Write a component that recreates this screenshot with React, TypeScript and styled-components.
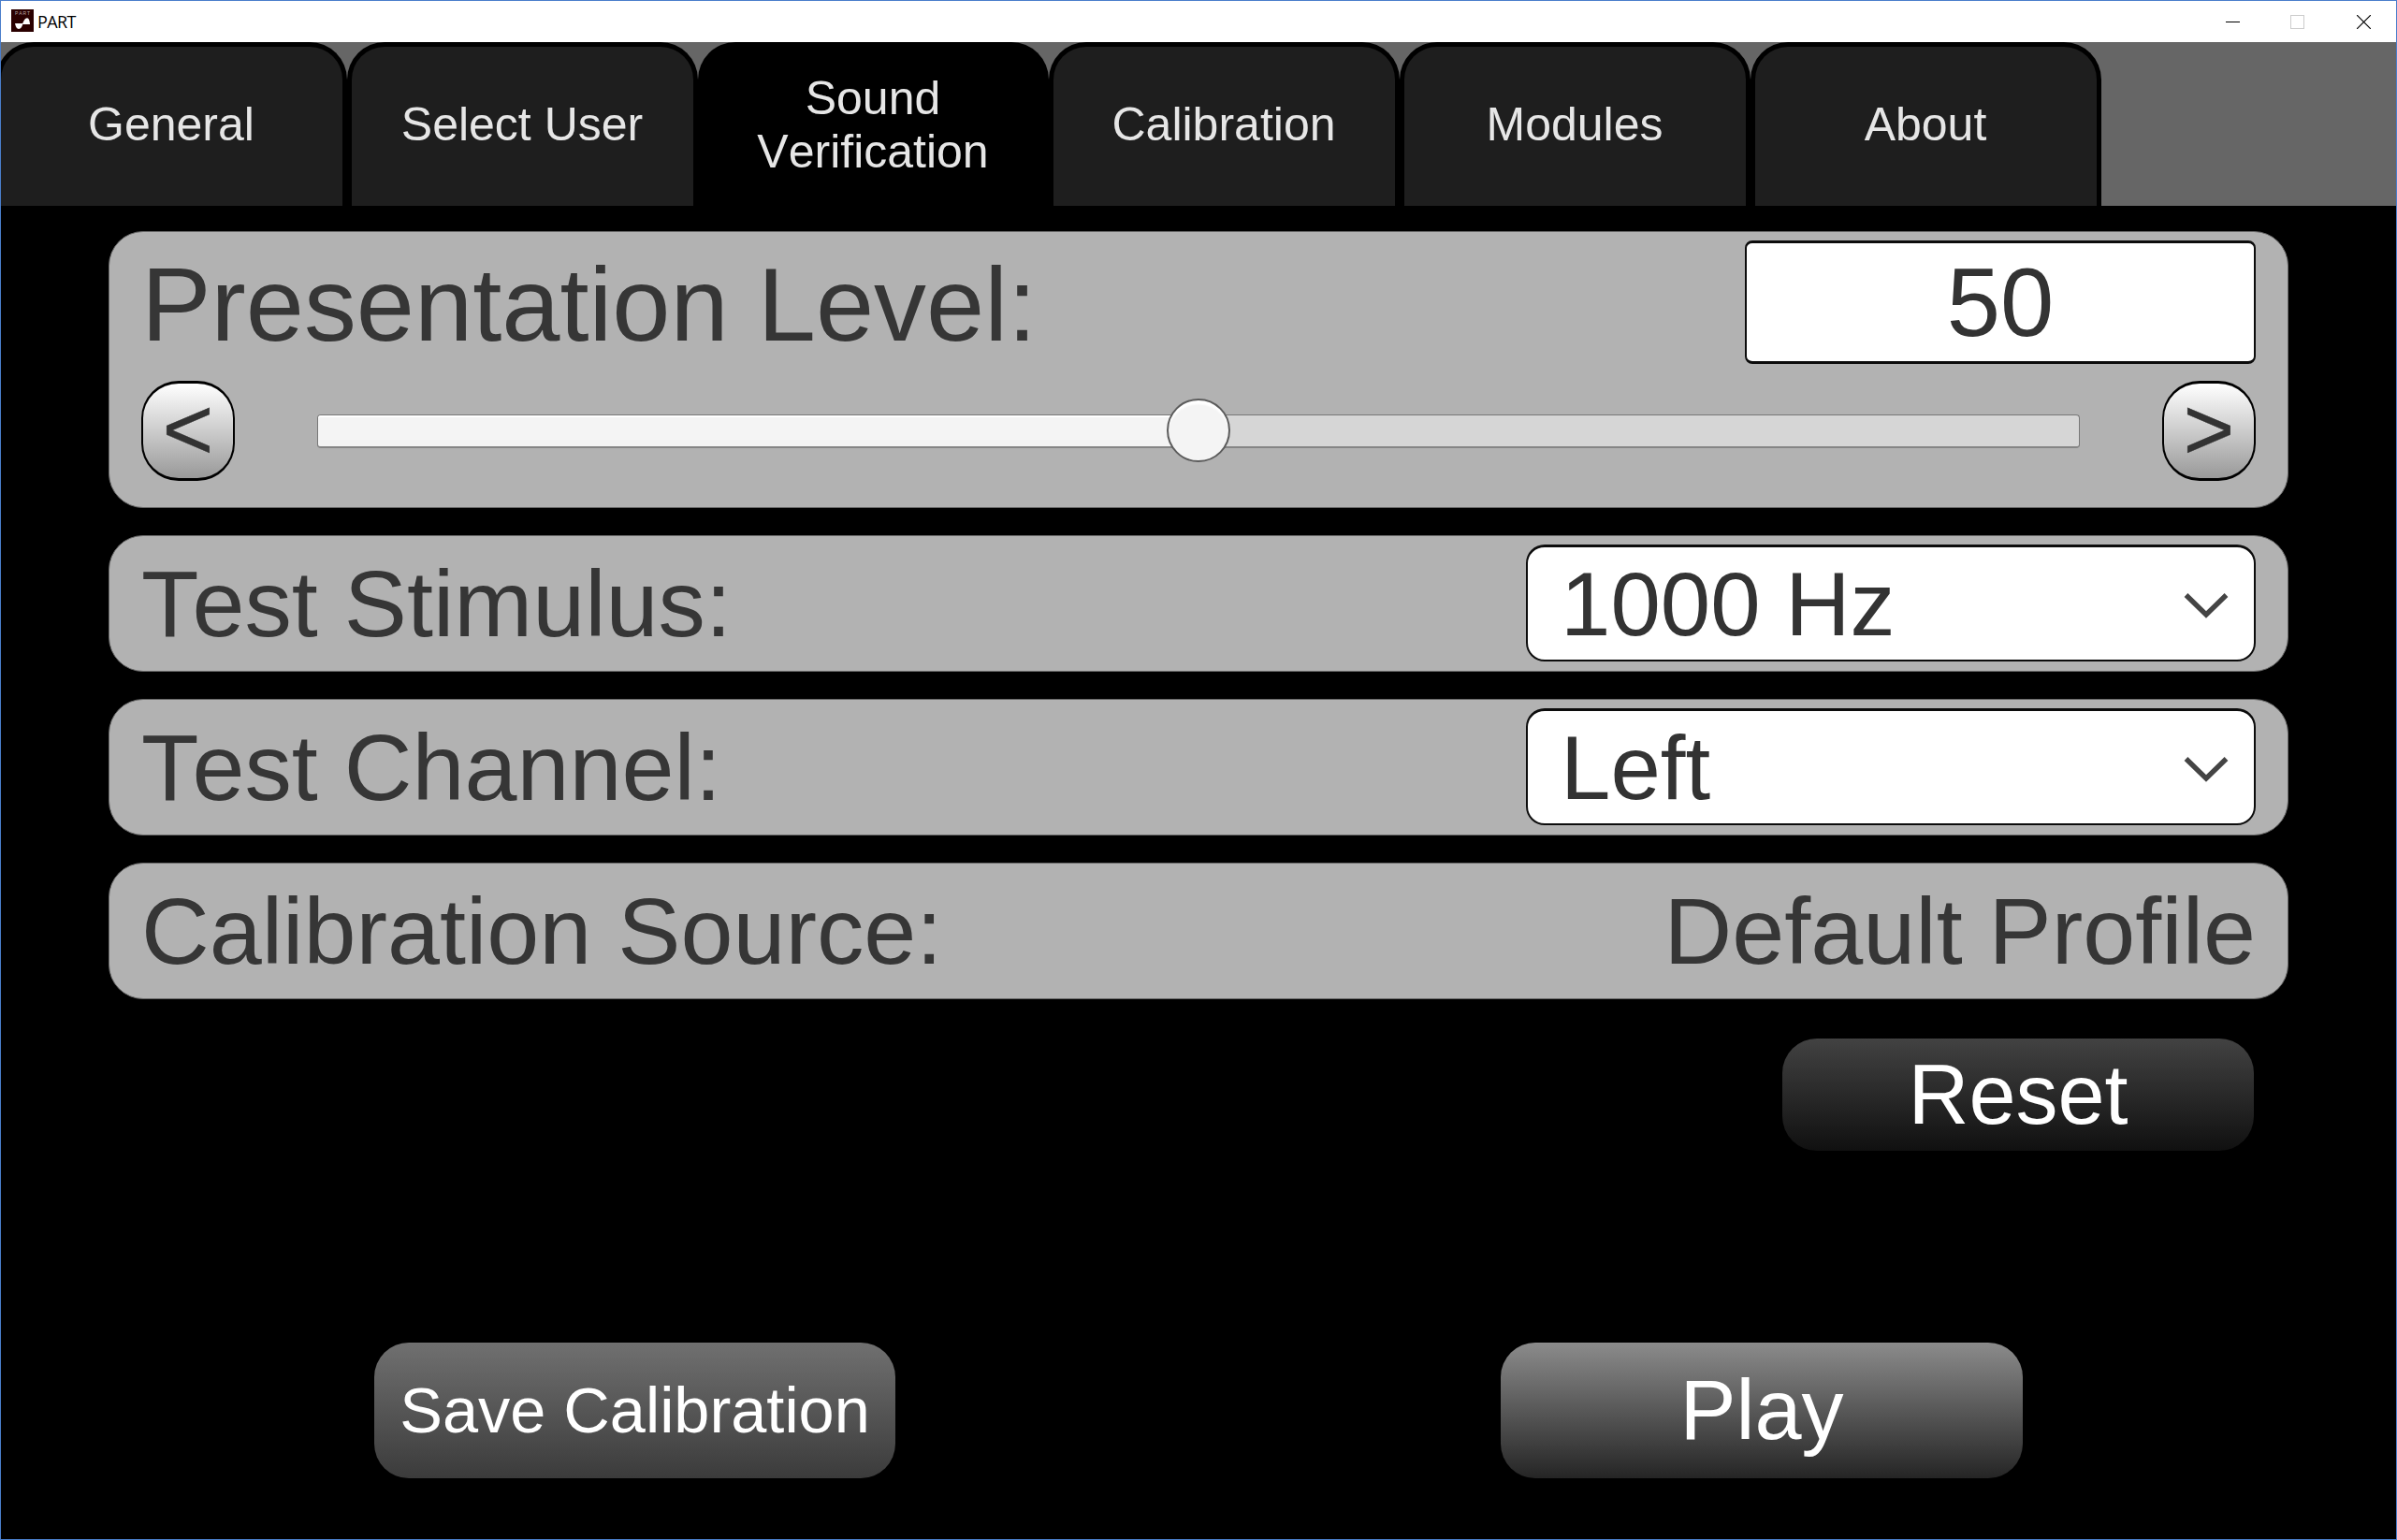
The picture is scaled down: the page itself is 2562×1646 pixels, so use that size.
import React, { useState } from "react";
import styled, { createGlobalStyle } from "styled-components";

const GlobalStyle = createGlobalStyle`
  body { margin: 0; background: #000; }
  * { box-sizing: border-box; }
  button { padding: 0; margin: 0; cursor: pointer; }
`;

const Window = styled.div`
  width: 2562px;
  height: 1646px;
  border: 1px solid #4a7ecb;
  background: #000;
  overflow: hidden;
  display: flex;
  flex-direction: column;
  font-family: "Liberation Sans", Arial, sans-serif;
  font-kerning: none;
  font-variant-ligatures: none;
`;

const TitleBar = styled.header`
  height: 44px;
  flex: none;
  background: #fff;
  display: flex;
  align-items: center;
  padding: 0 27px 0 11px;
`;

const AppIcon = styled.svg`
  width: 24px;
  height: 24px;
  margin-top: -2px;
`;

const Title = styled.span`
  flex: 1;
  margin-left: 4px;
  font: 18px/24px "Open Sans", sans-serif;
  letter-spacing: -0.6px;
  color: #000;
`;

const Controls = styled.div`
  display: flex;
  align-items: center;
  height: 100%;
  svg { display: block; }
`;

const Control = styled.div<{ $gap?: number }>`
  width: 15px;
  height: 15px;
  margin-left: ${(p) => p.$gap ?? 0}px;
`;

const TabStrip = styled.nav`
  height: 175px;
  flex: none;
  background: #666;
  display: flex;
`;

const Tab = styled.button<{ $active: boolean }>`
  width: 375px;
  height: 175px;
  flex: none;
  border: 5px solid #000;
  border-bottom: 0;
  border-radius: 40px 40px 0 0;
  background: ${(p) => (p.$active ? "#000" : "#1e1e1e")};
  color: #e6e6e6;
  font: 50px/57px "Liberation Sans", Arial, sans-serif;
  font-kerning: none;
  font-variant-ligatures: none;
  white-space: pre-line;
  padding: 0 1px 3px 0;
  &:first-child { margin-left: -5px; }
`;

const Content = styled.main`
  flex: 1;
  padding: 27px 115px 0;
  display: flex;
  flex-direction: column;
`;

const Panels = styled.section`
  display: flex;
  flex-direction: column;
  gap: 29px;
`;

const Panel = styled.div`
  border: 1px solid #686868;
  border-radius: 37px;
  background: #b2b2b2;
  padding: 0 34px;
  color: #363636;
`;

const LevelPanel = styled(Panel)`
  height: 296px;
  padding-top: 9px;
`;

const Row = styled(Panel)`
  height: 146px;
  display: flex;
  align-items: center;
  justify-content: space-between;
`;

const LevelHeader = styled.div`
  display: flex;
  justify-content: space-between;
  height: 132px;
`;

const LevelLabel = styled.label`
  font-size: 111.8px;
  line-height: 138px;
  white-space: nowrap;
`;

const Label = styled.span<{ $tightInitial?: boolean }>`
  font-size: 100.7px;
  line-height: 144px;
  white-space: nowrap;
  &::first-letter {
    letter-spacing: ${(p) => (p.$tightInitial ? "-7px" : "normal")};
  }
`;

const NumberBox = styled.div`
  width: 546px;
  height: 132px;
  border: 2px solid #0c0c0c;
  border-top-width: 3px;
  border-bottom-width: 3px;
  border-radius: 8px;
  background: #fff;
  color: #333;
  font-size: 103px;
  line-height: 128px;
  text-align: center;
`;

const SliderRow = styled.div`
  margin-top: 18px;
  height: 107px;
  display: flex;
  align-items: center;
  gap: 88px;
`;

const StepButton = styled.button`
  width: 100px;
  height: 107px;
  flex: none;
  border: 2px solid #000;
  border-top-width: 3px;
  border-bottom-width: 3px;
  border-radius: 40px;
  background: linear-gradient(#fff, #999);
  color: #333;
  font: 94px/98px "Liberation Sans", Arial, sans-serif;
  -webkit-text-stroke: 0.4px #333;
  padding-bottom: 3px;
`;

const Track = styled.div`
  position: relative;
  flex: 1;
  height: 36px;
  border: 1px solid #777;
  border-bottom: 2px solid #858585;
  border-radius: 4px;
  background: #d6d6d6;
`;

const Fill = styled.div`
  height: 100%;
  border-radius: 3px 0 0 3px;
  border-top: 2px solid #fff;
  background: #f4f4f4;
`;

const Thumb = styled.div`
  position: absolute;
  top: -18px;
  width: 68px;
  height: 68px;
  margin-left: -34px;
  border: 2px solid #5c5c5c;
  border-radius: 50%;
  background: #f4f4f4;
  box-shadow: inset 0 5px 2px -1px #fff;
`;

const Select = styled.button`
  width: 780px;
  height: 125px;
  margin-top: -1px;
  display: flex;
  align-items: center;
  justify-content: space-between;
  border: 2px solid #0c0c0c;
  border-top-width: 3px;
  border-radius: 20px;
  background: #fff;
  color: #333;
  padding: 1px 25px 0 35px;
  font: 96px/120px "Liberation Sans", Arial, sans-serif;
  font-kerning: none;
  font-variant-ligatures: none;
`;

const Actions = styled.div<{ $top: number; $left: number; $gap?: number }>`
  display: flex;
  gap: ${(p) => p.$gap ?? 0}px;
  margin: ${(p) => p.$top}px 0 0 ${(p) => p.$left}px;
`;

const ActionButton = styled.button<{
  $w: number; $h: number; $from: string; $to: string; $size: number; $drop?: number;
}>`
  width: ${(p) => p.$w}px;
  height: ${(p) => p.$h}px;
  border: 0;
  border-radius: 37px;
  background: linear-gradient(${(p) => p.$from}, ${(p) => p.$to});
  color: #fff;
  font: ${(p) => p.$size}px/1.15 "Liberation Sans", Arial, sans-serif;
  font-kerning: none;
  font-variant-ligatures: none;
  white-space: nowrap;
  padding-top: ${(p) => p.$drop ?? 0}px;
`;

const Chevron = () => (
  <svg width="52" height="36" viewBox="0 0 52 36">
    <path d="M4.500 8 26 29 47.500 8" fill="none" stroke="#444" strokeWidth="5.400" />
  </svg>
);

const TABS = ["General", "Select User", "Sound\nVerification", "Calibration", "Modules", "About"];

export default function App() {
  const [tab, setTab] = useState(2);
  const [level, setLevel] = useState(50);
  return (
    <>
      <GlobalStyle />
      <Window>
        <TitleBar>
          <AppIcon viewBox="0 0 24 24">
            <rect width="24" height="24" fill="#2a0000" />
            <text x="12" y="6" fontSize="5" fill="#b9a5a5" textAnchor="middle" textLength="16">PART</text>
            <path d="M4 15h8.500C12 18 10 21 8 21s-3.500-3-4-6Z" fill="#fff" />
            <path d="M12 16c1-4 3-6.800 5-6.800 1.800 0 2.800 3 3 6.800Z" fill="#fff" />
          </AppIcon>
          <Title>PART</Title>
          <Controls>
            <Control>
              <svg width="15" height="15"><path d="M0 7.500h15" stroke="#000" /></svg>
            </Control>
            <Control $gap={54}>
              <svg width="15" height="15"><rect x=".5" y=".5" width="14" height="14" fill="none" stroke="#ccc" /></svg>
            </Control>
            <Control $gap={56}>
              <svg width="15" height="15"><path d="M0 0l15 15M15 0L0 15" stroke="#000" strokeWidth="1.200" /></svg>
            </Control>
          </Controls>
        </TitleBar>
        <TabStrip>
          {TABS.map((name, i) => (
            <Tab key={name} $active={i === tab} onClick={() => setTab(i)}>{name}</Tab>
          ))}
        </TabStrip>
        <Content>
          <Panels>
            <LevelPanel>
              <LevelHeader>
                <LevelLabel>Presentation Level:</LevelLabel>
                <NumberBox>{level}</NumberBox>
              </LevelHeader>
              <SliderRow>
                <StepButton onClick={() => setLevel(Math.max(0, level - 1))}>&lt;</StepButton>
                <Track>
                  <Fill style={{ width: `${level}%` }} />
                  <Thumb style={{ left: `${level}%` }} />
                </Track>
                <StepButton onClick={() => setLevel(Math.min(100, level + 1))}>&gt;</StepButton>
              </SliderRow>
            </LevelPanel>
            <Row>
              <Label $tightInitial>Test Stimulus:</Label>
              <Select>1000 Hz<Chevron /></Select>
            </Row>
            <Row>
              <Label $tightInitial>Test Channel:</Label>
              <Select>Left<Chevron /></Select>
            </Row>
            <Row>
              <Label>Calibration Source:</Label>
              <Label>Default Profile</Label>
            </Row>
          </Panels>
          <Actions $top={42} $left={1789}>
            <ActionButton $w={504} $h={120} $from="#424242" $to="#101010" $size={90} $drop={2}>Reset</ActionButton>
          </Actions>
          <Actions $top={205} $left={284} $gap={647}>
            <ActionButton $w={557} $h={145} $from="#707070" $to="#3b3b3b" $size={68.5} $drop={2}>Save Calibration</ActionButton>
            <ActionButton $w={558} $h={145} $from="#8b8b8b" $to="#252525" $size={90}>Play</ActionButton>
          </Actions>
        </Content>
      </Window>
    </>
  );
}
